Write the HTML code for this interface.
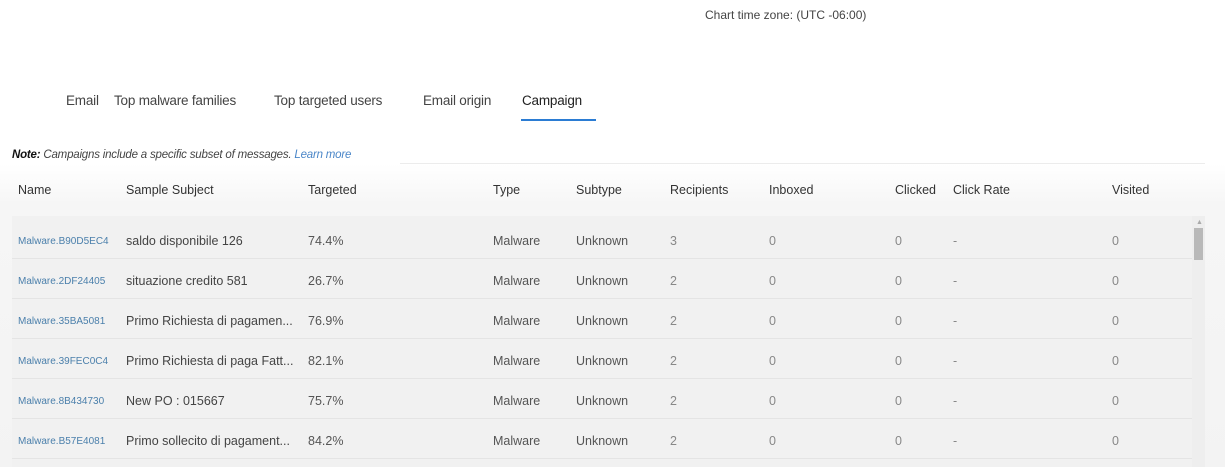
<!DOCTYPE html>
<html><head><style>
body{margin:0;width:1225px;height:467px;overflow:hidden;background:#fff;font-family:"Liberation Sans",sans-serif;color:#333;position:relative}
.a{position:absolute;white-space:nowrap}
.tab{font-size:13.5px;color:#444;top:93px;letter-spacing:-0.2px}
.hd{font-size:12.5px;color:#333;top:183px}
.c{font-size:12.5px;color:#555}
.n{font-size:10px;color:#4a7fab}
.g{color:#888}
</style></head><body>
<div class="a" style="left:705px;top:8px;font-size:12px;color:#444">Chart time zone: (UTC -06:00)</div>
<div class="a tab" style="left:66px">Email</div>
<div class="a tab" style="left:114px">Top malware families</div>
<div class="a tab" style="left:274px">Top targeted users</div>
<div class="a tab" style="left:423px">Email origin</div>
<div class="a tab" style="left:522px;color:#222">Campaign</div>
<div class="a" style="left:521px;top:119px;width:75px;height:2px;background:#2b7cd3"></div>
<div class="a" style="left:12px;top:149px;font-size:11.5px;font-style:italic;color:#444;letter-spacing:-0.2px"><b style="color:#111">Note:</b> Campaigns include a specific subset of messages. <span style="color:#4a86c8">Learn more</span></div>
<div class="a" style="left:400px;top:163px;width:805px;height:1px;background:#ececec"></div>
<div class="a" style="left:0;top:164px;width:1225px;height:303px;background:linear-gradient(#fff,#f6f6f6 40px,#f3f3f3)"></div>
<div class="a hd" style="left:18px">Name</div>
<div class="a hd" style="left:126px">Sample Subject</div>
<div class="a hd" style="left:308px">Targeted</div>
<div class="a hd" style="left:493px">Type</div>
<div class="a hd" style="left:576px">Subtype</div>
<div class="a hd" style="left:670px">Recipients</div>
<div class="a hd" style="left:769px">Inboxed</div>
<div class="a hd" style="left:895px">Clicked</div>
<div class="a hd" style="left:953px">Click Rate</div>
<div class="a hd" style="left:1112px">Visited</div>
<div class="a" style="left:12px;top:216px;width:1180px;height:251px;background:#f1f1f1"></div>
<div class="a" style="left:1192px;top:216px;width:13px;height:251px;background:#eeeeee"></div>
<div class="a" style="left:1194px;top:228px;width:9px;height:32px;background:#b9b9b9"></div>
<div class="a" style="left:1196px;top:219px;font-size:7px;color:#aaa">▲</div>
<div id="rows"></div>
<script>
var d=[["Malware.B90D5EC4","saldo disponibile 126","74.4%","3"],["Malware.2DF24405","situazione credito 581","26.7%","2"],["Malware.35BA5081","Primo Richiesta di pagamen...","76.9%","2"],["Malware.39FEC0C4","Primo Richiesta di paga Fatt...","82.1%","2"],["Malware.8B434730","New PO : 015667","75.7%","2"],["Malware.B57E4081","Primo sollecito di pagament...","84.2%","2"]];
var h="";
d.forEach(function(r,i){var y=234+i*40;
h+='<div class="a" style="left:12px;top:'+(y+24)+'px;width:1180px;height:1px;background:#e4e4e4"></div>';
h+='<div class="a n" style="left:18px;top:'+(y+2)+'px">'+r[0]+'</div>';
h+='<div class="a c" style="left:126px;top:'+y+'px;color:#444">'+r[1]+'</div>';
h+='<div class="a c" style="left:308px;top:'+y+'px">'+r[2]+'</div>';
h+='<div class="a c" style="left:493px;top:'+y+'px">Malware</div>';
h+='<div class="a c" style="left:576px;top:'+y+'px">Unknown</div>';
h+='<div class="a c g" style="left:670px;top:'+y+'px">'+r[3]+'</div>';
h+='<div class="a c g" style="left:769px;top:'+y+'px">0</div>';
h+='<div class="a c g" style="left:895px;top:'+y+'px">0</div>';
h+='<div class="a c g" style="left:953px;top:'+y+'px">-</div>';
h+='<div class="a c g" style="left:1112px;top:'+y+'px">0</div>';});
document.getElementById("rows").innerHTML=h;
</script>
</body></html>
